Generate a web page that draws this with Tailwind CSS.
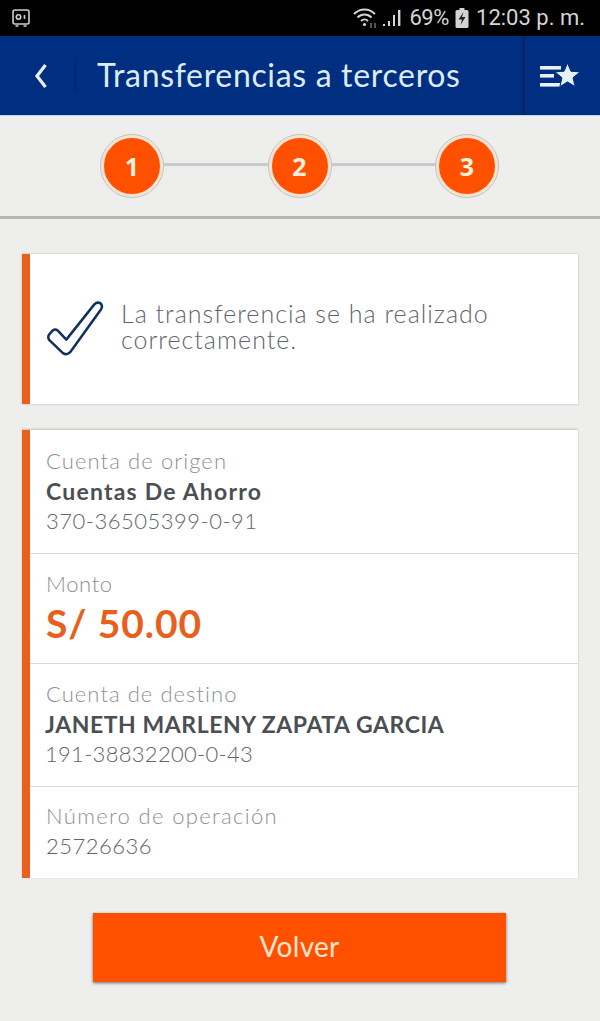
<!DOCTYPE html>
<html lang="es">
<head>
<meta charset="utf-8">
<title>Transferencias a terceros</title>
<script src="https://cdn.jsdelivr.net/npm/@tailwindcss/browser@4"></script>
</head>
<body class="m-0 bg-[#eeeeec]">
<div class="w-[600px] h-[1021px] overflow-hidden flex flex-col bg-[#eeeeec] font-['Lato','Open_Sans',sans-serif]">
  <!-- status bar -->
  <div class="h-[36px] bg-black flex items-center pl-[12px] pr-[15px] text-[#d4d4d4] font-['Roboto',sans-serif] shrink-0">
    <svg width="18" height="19" viewBox="0 0 18 19" fill="none" stroke="#cfcfcf" stroke-width="1.6"><rect x="1" y="1" width="16" height="14" rx="2"/><circle cx="6.5" cy="8" r="2.2"/><path d="M12.5 6v4M3.5 17h3M11.5 17h3"/></svg>
    <div class="ml-auto flex items-center">
      <svg width="26" height="24" viewBox="0 0 26 24" fill="none" stroke="#d4d4d4" stroke-width="1.8"><path d="M1 8c6-6 15-6 21 0M4.5 11.5c4-4 10-4 14 0M8 15c2-2 5-2 7 0"/><circle cx="11.5" cy="18.5" r="1.6" fill="#d4d4d4" stroke="none"/><path d="M18 22v-5M22 22v-5" stroke="#777" stroke-width="1.4"/></svg>
      <svg class="ml-[3px]" width="21" height="20" viewBox="0 0 21 20" fill="#d4d4d4"><rect x="1" y="16" width="2" height="2"/><rect x="6" y="13" width="2" height="5"/><rect x="11" y="7" width="2" height="11"/><rect x="16" y="2" width="2.4" height="16"/></svg>
      <span class="ml-[6px] text-[22px] leading-none tracking-[-0.4px]">69%</span>
      <svg class="ml-[6px]" width="14" height="20" viewBox="0 0 14 20"><rect x="4.5" y="0" width="5" height="2.5" fill="#d4d4d4"/><rect x="0.5" y="2" width="13" height="18" rx="1.5" fill="#d4d4d4"/><path d="M8.5 4 3.5 11.5H7L5.5 17l5-8H7z" fill="#222"/></svg>
      <span class="ml-[7px] text-[22px] leading-none">12:03 p. m.</span>
    </div>
  </div>
  <!-- header -->
  <div class="h-[80px] bg-[#002e80] border-b border-b-[#c9d6e6] flex items-stretch shrink-0">
    <div class="w-[76px] flex items-center pl-[34px] relative">
      <svg width="14" height="26" viewBox="0 0 14 26" fill="none" stroke="#e8f1fa" stroke-width="3.2"><path d="M11.5 2 3 13l8.5 11"/></svg>
      <div class="absolute right-0 top-[22px] h-[34px] w-[2px] bg-[#00286f]"></div>
    </div>
    <div class="flex-1 flex items-center pl-[21px] pb-[2px] text-[#dcebf8] text-[32px] font-normal tracking-[0.67px] leading-none">Transferencias a terceros</div>
    <div class="w-[78px] border-l-[3px] border-l-[#00246a] flex items-center pl-[15px]">
      <svg width="40" height="26" viewBox="0 0 40 26"><g fill="#e8f1fa"><rect x="0" y="3" width="21" height="3.6"/><rect x="0" y="11" width="14" height="3.6"/><rect x="0" y="20" width="20" height="3.6"/><path d="M27.5 0l3.4 8.2 9.1.7-7 5.9 2.2 8.9-7.7-4.8-7.7 4.8 2.2-8.9-7-5.9 9.1-.7z" stroke="#002e80" stroke-width="1"/></g></svg>
    </div>
  </div>
  <!-- steps -->
  <div class="h-[103px] border-b-[3px] border-b-[#b5b5b3] flex items-center pl-[101px] shrink-0">
    <div class="w-[62px] h-[62px] rounded-full bg-[#ff5000] border-[3px] border-[#ffe3d0] outline outline-[1.5px] outline-[#bcc2c4] flex items-center justify-center text-[#fff0dc] font-bold text-[25px] leading-none shrink-0 font-['Open_Sans',sans-serif]">1</div>
    <div class="w-[105.5px] h-[3px] -mt-[3px] bg-[#c6cbce]"></div>
    <div class="w-[62px] h-[62px] rounded-full bg-[#ff5000] border-[3px] border-[#ffe3d0] outline outline-[1.5px] outline-[#bcc2c4] flex items-center justify-center text-[#fff0dc] font-bold text-[25px] leading-none shrink-0 font-['Open_Sans',sans-serif]">2</div>
    <div class="w-[105.5px] h-[3px] -mt-[3px] bg-[#c6cbce]"></div>
    <div class="w-[62px] h-[62px] rounded-full bg-[#ff5000] border-[3px] border-[#ffe3d0] outline outline-[1.5px] outline-[#bcc2c4] flex items-center justify-center text-[#fff0dc] font-bold text-[25px] leading-none shrink-0 font-['Open_Sans',sans-serif]">3</div>
  </div>
  <!-- content -->
  <div class="flex-1 px-[22px] pt-[35px]">
    <div class="h-[150px] bg-white border-l-[8px] border-l-[#e8601c] shadow-[0_0_2px_rgba(0,0,0,0.25)] flex items-center pl-[15px] pb-[2px]">
      <svg width="60" height="58" viewBox="0 0 62 60" fill="none" class="shrink-0 mt-[2px]"><path d="M4 36 L8 31.5 Q10.5 29.5 13 31.5 L22 41 L51 4.5 Q54 1.5 57.5 3.5 Q60 6 58 9.5 L26 54 Q22.5 57.5 18.5 55 L4.5 41.5 Q2.5 39 4 36Z" stroke="#12305e" stroke-width="2.6" stroke-linejoin="round"/></svg>
      <p class="ml-[16px] text-[25px] leading-[26px] tracking-[1px] font-light text-[#5f656a] pb-[4px]">La transferencia se ha realizado<br>correctamente.</p>
    </div>
    <div class="mt-[26px] h-[448px] overflow-hidden bg-white border-l-[8px] border-l-[#e8601c] shadow-[0_-1px_2px_rgba(0,0,0,0.2)] flex flex-col text-[#5f656a]">
      <div class="h-[124px] border-b border-b-[#d9d9d9] pl-[16px] pt-[16px] shrink-0">
        <div class="text-[22px] leading-[30px] tracking-[1.1px] font-light text-[#8d9195]">Cuenta de origen</div>
        <div class="text-[23px] leading-[30px] tracking-[1.2px] font-bold text-[#4b4f53]">Cuentas De Ahorro</div>
        <div class="text-[22px] leading-[30px] tracking-[0.5px] font-light">370-36505399-0-91</div>
      </div>
      <div class="h-[110px] border-b border-b-[#d9d9d9] pl-[16px] pt-[16px] shrink-0">
        <div class="text-[22px] leading-[28px] tracking-[0.6px] font-light text-[#8d9195]">Monto</div>
        <div class="text-[39px] leading-[50px] tracking-[0.9px] font-bold text-[#e8601c]">S/ 50.00</div>
      </div>
      <div class="h-[123px] border-b border-b-[#d9d9d9] pl-[16px] pt-[15px] shrink-0">
        <div class="text-[22px] leading-[30px] tracking-[1.05px] font-light text-[#8d9195]">Cuenta de destino</div>
        <div class="text-[23px] leading-[30px] tracking-[0.55px] font-bold text-[#4b4f53] -ml-[1px]">JANETH MARLENY ZAPATA GARCIA</div>
        <div class="text-[22px] leading-[30px] tracking-[0.3px] font-light -ml-[1px]">191-38832200-0-43</div>
      </div>
      <div class="pl-[16px] pt-[14px] shrink-0">
        <div class="text-[22px] leading-[30px] tracking-[1.35px] font-light text-[#8d9195]">Número de operación</div>
        <div class="text-[22px] leading-[30px] tracking-[0.5px] font-light">25726636</div>
      </div>
    </div>
    <button class="block mt-[35px] ml-[71px] w-[413px] h-[69px] bg-[#ff5000] shadow-[0_1px_3px_rgba(0,0,0,0.55)] text-[#ffe6cf] text-[28px] font-normal leading-none tracking-[0.3px] pb-[3px]">Volver</button>
  </div>
</div>
</body>
</html>
